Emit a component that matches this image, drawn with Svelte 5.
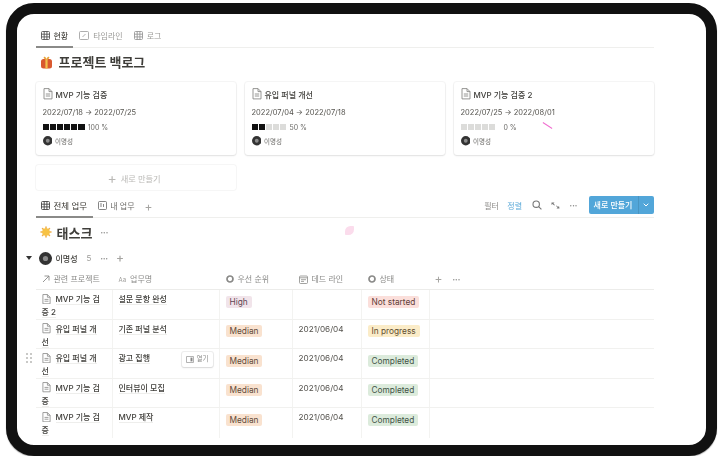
<script lang="ts">
	const cards = [
		{ title: 'MVP 기능 검증', dates: '2022/07/18 → 2022/07/25', on: 6, total: 6, pct: '100 %' },
		{ title: '유입 퍼널 개선', dates: '2022/07/04 → 2022/07/18', on: 2, total: 5, pct: '50 %' },
		{ title: 'MVP 기능 검증 2', dates: '2022/07/25 → 2022/08/01', on: 0, total: 5, pct: '0 %' }
	];
	const rows = [
		{ project: 'MVP 기능 검증 2', task: '설문 문항 완성', pri: 'High', date: '', status: 'Not started' },
		{ project: '유입 퍼널 개선', task: '기존 퍼널 분석', pri: 'Median', date: '2021/06/04', status: 'In progress' },
		{ project: '유입 퍼널 개선', task: '광고 집행', pri: 'Median', date: '2021/06/04', status: 'Completed', hover: true },
		{ project: 'MVP 기능 검증', task: '인터뷰이 모집', pri: 'Median', date: '2021/06/04', status: 'Completed' },
		{ project: 'MVP 기능 검증', task: 'MVP 제작', pri: 'Median', date: '2021/06/04', status: 'Completed' }
	];
	const tagClass = (t: string) => t.toLowerCase().replace(' ', '-');
</script>

{#snippet doc(size = 10)}
	<svg class="doc" width={size} height={size * 1.15} viewBox="0 0 10 11.5" fill="none" stroke="#8a8a88" stroke-width="0.9">
		<path d="M1 .6h5l3 3v7.3H1z" />
		<path d="M6 .6v3h3M2.8 6h4.4M2.8 8h4.4" />
	</svg>
{/snippet}

{#snippet table(color = '#4a4a48')}
	<svg width="9" height="9" viewBox="0 0 9 9" fill="none" stroke={color} stroke-width="0.9">
		<rect x=".5" y=".5" width="8" height="8" rx="1" />
		<path d="M.5 3.2h8M.5 5.9h8M3.2 .5v8M5.9 .5v8" />
	</svg>
{/snippet}

{#snippet avatar(size = 10)}
	<svg width={size} height={size} viewBox="0 0 10 10">
		<circle cx="5" cy="5" r="5" fill="#333" />
		<circle cx="5" cy="5" r="2" fill="#8b8b8b" />
	</svg>
{/snippet}

{#snippet radio()}
	<svg width="8" height="8" viewBox="0 0 8 8"><circle cx="4" cy="4" r="3" fill="none" stroke="#8a8a88" stroke-width="1.7" /></svg>
{/snippet}

<div class="device">
	<div class="screen">
		<div class="page">
			<nav class="tabs top-tabs">
				<span class="tab active">{@render table('#555')}현황</span>
				<span class="tab">
					<svg width="10" height="9" viewBox="0 0 10 9" fill="none" stroke="#999" stroke-width="0.8"><rect x=".5" y=".5" width="9" height="8" rx="1" /><path d="M3.500 6l3-3" /></svg>
					타임라인
				</span>
				<span class="tab">{@render table('#999')}로그</span>
			</nav>

			<h1 class="title">
				<svg width="13" height="13" viewBox="0 0 13 13">
					<rect x="1" y="3" width="11" height="9.5" rx="2.500" fill="#d9592f" />
					<rect x="5.4" y="3" width="2.2" height="9.5" fill="#f2c14e" />
					<path d="M6.5 3.5C4 3.5 3 1.5 4 .8s2.500 1 2.500 2.700C6.500 1.800 8 .1 9 .8s0 2.700-2.500 2.700z" fill="#e8a33a" />
				</svg>
				프로젝트 백로그
			</h1>

			<div class="cards">
				{#each cards as card}
					<article class="card">
						<div class="card-title">{@render doc(10)}{card.title}</div>
						<div class="card-dates">{card.dates}</div>
						<div class="progress" class:none={card.on === 0}>
							<span class="blocks">
								{#each Array(card.total) as _, i}
									<i class:on={i < card.on}></i>
								{/each}
							</span>
							{card.pct}
						</div>
						<div class="person">{@render avatar(9.5)}이명성</div>
					</article>
				{/each}
			</div>

			<div class="new-card"><span class="plus">+</span> 새로 만들기</div>

			<div class="view-bar">
				<nav class="tabs">
					<span class="tab active wide">{@render table('#444')}전체 업무</span>
					<span class="tab dark">
						<svg width="9" height="9" viewBox="0 0 9 9" fill="none" stroke="#666" stroke-width="0.8"><rect x=".5" y=".5" width="8" height="8" rx="1" /><path d="M2 3h2M2 5h2M5.500 3v3" /></svg>
						내 업무
					</span>
					<span class="tab-add">+</span>
				</nav>
				<div class="tools">
					<span class="tool">필터</span>
					<span class="tool sort">정렬</span>
					<svg width="10" height="10" viewBox="0 0 10 10" fill="none" stroke="#777" stroke-width="1.100"><circle cx="4.200" cy="4.200" r="3.200" /><path d="M6.600 6.600L9.400 9.400" /></svg>
					<svg width="9" height="9" viewBox="0 0 9 9" fill="#777"><path d="M.5 1.500h3l-1 1 1.400 1.400-.6.600L1.500 3.100l-1 1zM8.500 7.500h-3l1-1-1.400-1.400.6-.6 1.300 1.400 1-1z" /></svg>
					<span class="more">•••</span>
					<div class="new-btn"><span>새로 만들기</span><b>
						<svg width="6" height="4" viewBox="0 0 6 4" fill="none" stroke="#fff" stroke-width="1"><path d="M.7.700L3 3l2.300-2.300" /></svg>
					</b></div>
				</div>
			</div>

			<h2 class="tasks">
				<svg width="12" height="12" viewBox="0 0 12 12">
					<g stroke="#f0b04a" stroke-width="1.500" stroke-linecap="round"><path d="M6 1v10M1 6h10M2.500 2.500l7 7M9.500 2.500l-7 7" /></g>
					<circle cx="6" cy="6" r="3.800" fill="#f7c244" />
				</svg>
				태스크 <span class="more h">•••</span>
			</h2>

			<div class="group">
				<span class="caret"></span>
				{@render avatar(13)}
				<span class="group-name">이명성</span>
				<span class="count">5</span>
				<span class="more">•••</span>
				<span class="tab-add">+</span>
			</div>

			<div class="grid head">
				<div class="cell">
					<svg width="8" height="8" viewBox="0 0 8 8" fill="none" stroke="#8a8a88" stroke-width="0.9"><path d="M1 7L7 1M2.500 1H7v4.500" /></svg>
					관련 프로젝트
				</div>
				<div class="cell"><span class="aa">Aa</span>업무명</div>
				<div class="cell">{@render radio()}우선 순위</div>
				<div class="cell">
					<svg width="9" height="9" viewBox="0 0 9 9" fill="none" stroke="#8a8a88" stroke-width="0.8"><rect x=".5" y="1" width="8" height="7.500" rx="1" /><path d="M.5 2.800h8M2 4.700h5M2 6.400h3" /></svg>
					데드 라인
				</div>
				<div class="cell">{@render radio()}상태</div>
				<div class="cell actions"><span class="tab-add">+</span><span class="more">•••</span></div>
			</div>

			<div class="rows">
				{#each rows as row}
					<div class="grid row">
						{#if row.hover}
							<span class="grip"><i></i><i></i><i></i><i></i><i></i><i></i></span>
						{/if}
						<div class="cell project">
							{@render doc(9)}<span class="link">{row.project}</span>
						</div>
						<div class="cell task">
							<span class="link">{row.task}</span>
							{#if row.hover}
								<span class="open">
									<svg width="8" height="7" viewBox="0 0 8 7" fill="none" stroke="#888" stroke-width="0.7"><rect x=".4" y=".4" width="7.200" height="6.200" rx=".6" /><rect x="4.500" y="1.600" width="2" height="3.800" fill="#888" stroke="none" /></svg>
									열기
								</span>
							{/if}
						</div>
						<div class="cell"><span class="pill {tagClass(row.pri)}">{row.pri}</span></div>
						<div class="cell date">{row.date}</div>
						<div class="cell"><span class="pill {tagClass(row.status)}">{row.status}</span></div>
						<div class="cell"></div>
					</div>
				{/each}
			</div>

			<span class="petal"></span>
			<span class="scratch"></span>
		</div>
	</div>
</div>

<style>
	:global(body) {
		background: #fff;
		overflow: hidden;
	}

	.device {
		box-sizing: border-box;
		width: 711px;
		height: 453px;
		margin: 3px 0 0 6px;
		border: 11.5px solid #111;
		border-radius: 28px;
		background: #fff;
		box-shadow: 0 1px 1px rgba(0, 0, 0, 0.35);
		font-family: Inter, 'Noto Sans CJK KR', sans-serif;
		color: #3f3e3a;
		filter: blur(0.5px);
	}

	.screen {
		height: 100%;
		border-radius: 16px;
		overflow: hidden;
	}

	.page {
		position: relative;
		width: 618px;
		margin-left: 18.500px;
		padding-top: 13.500px;
	}

	.tabs {
		display: flex;
		align-items: stretch;
	}

	.top-tabs {
		gap: 1px;
		height: 19.500px;
		border-bottom: 1px solid #efefed;
	}

	.tab {
		display: flex;
		align-items: center;
		gap: 4px;
		padding: 0 5px 2px;
		margin-bottom: -1px;
		font-size: 8px;
		color: #9b9a97;
		border-bottom: 2px solid transparent;
	}

	.tab.active {
		color: #37352f;
		border-bottom-color: #8a8a88;
	}

	.tab.dark {
		gap: 3px;
		color: #6b6a67;
	}

	.tab.wide {
		font-size: 8.500px;
		padding-right: 6px;
	}

	.title {
		display: flex;
		align-items: center;
		gap: 6px;
		height: 20px;
		margin: 4px 0 0 4px;
		font-size: 13px;
		font-weight: 700;
		line-height: 20px;
	}

	.cards {
		display: grid;
		grid-template-columns: repeat(3, 200px);
		gap: 9px;
		margin-top: 10px;
	}

	.card {
		box-sizing: border-box;
		height: 73px;
		padding: 5px 7px;
		border-radius: 3px;
		background: #fff;
		box-shadow: 0 0 0 1px rgba(15, 15, 15, 0.04), 0 1px 2px rgba(15, 15, 15, 0.09);
	}

	.card-title {
		display: flex;
		align-items: center;
		gap: 3px;
		height: 14px;
		font-size: 8px;
		font-weight: 500;
	}

	.card-dates {
		height: 12px;
		margin-top: 6px;
		font-size: 7.500px;
		line-height: 12px;
		color: #55534e;
	}

	.progress {
		display: flex;
		align-items: center;
		gap: 3px;
		height: 10px;
		margin-top: 3px;
		font-size: 7px;
		color: #6b6a67;
	}

	.progress.none {
		gap: 8px;
	}

	.blocks {
		display: flex;
		gap: 1px;
	}

	.blocks i {
		width: 6.200px;
		height: 6px;
		background: #dcdcda;
	}

	.blocks i.on {
		background: #111;
	}

	.person {
		display: flex;
		align-items: center;
		gap: 3px;
		margin-top: 4px;
		font-size: 6.500px;
		color: #6b6a67;
	}

	.new-card {
		display: flex;
		align-items: center;
		justify-content: center;
		gap: 4px;
		box-sizing: border-box;
		width: 200px;
		height: 25px;
		margin-top: 10px;
		padding-right: 3px;
		border-radius: 3px;
		box-shadow: 0 0 0 1px rgba(15, 15, 15, 0.04);
		font-size: 8.200px;
		color: #b9b8b5;
	}

	.plus {
		font-size: 14px;
		line-height: 1;
	}

	.view-bar {
		display: flex;
		justify-content: space-between;
		height: 21px;
		margin-top: 6px;
		border-bottom: 1px solid #efefed;
	}

	.tab-add {
		align-self: center;
		margin-left: 5px;
		font-size: 12px;
		line-height: 1;
		color: #a5a4a1;
	}

	.tools {
		display: flex;
		align-items: center;
		gap: 9.500px;
		height: 18px;
		font-size: 8px;
	}

	.tool {
		color: #8d8c89;
	}

	.sort {
		margin-left: -1px;
		color: #5aa9d8;
	}

	.more {
		font-size: 4.500px;
		letter-spacing: 0.1px;
		color: #8a8a88;
	}

	.new-btn {
		display: flex;
		align-items: stretch;
		width: 65px;
		height: 18px;
		margin-left: 1.500px;
		border-radius: 2px;
		background: #52a6d9;
		color: #fff;
		font-size: 8px;
		font-weight: 500;
	}

	.new-btn span {
		flex: 1;
		line-height: 18px;
		text-align: center;
	}

	.new-btn b {
		display: flex;
		align-items: center;
		justify-content: center;
		width: 15px;
		border-left: 1px solid rgba(0, 0, 0, 0.1);
	}

	.tasks {
		display: flex;
		align-items: center;
		gap: 5px;
		height: 20px;
		margin: 4px 0 0 4px;
		font-size: 13px;
		font-weight: 700;
	}

	.more.h {
		margin-left: 3px;
		font-weight: 400;
	}

	.group {
		position: relative;
		display: flex;
		align-items: center;
		gap: 4px;
		height: 14px;
		margin: 9px 0 0 3px;
		font-size: 8px;
		font-weight: 500;
	}

	.group-name {
		margin-right: 5px;
	}

	.count {
		margin-right: 5px;
		font-weight: 400;
		color: #9b9a97;
	}

	.group .tab-add {
		margin-left: 4px;
	}

	.caret {
		position: absolute;
		left: -13px;
		top: 5px;
		border: 3px solid transparent;
		border-top: 4.500px solid #333;
		border-bottom: 0;
	}

	.grid {
		position: relative;
		display: grid;
		grid-template-columns: 77px 107px 73px 69px 68px 1fr;
		border-bottom: 1px solid #f1f1ef;
	}

	.head {
		height: 20px;
		margin-top: 4px;
		font-size: 8px;
		color: #8a8a88;
		border-bottom-color: #ececea;
	}

	.head .cell {
		display: flex;
		align-items: center;
		gap: 4px;
		border: 0;
		padding: 0 6px;
		white-space: nowrap;
	}

	.aa {
		font-size: 6px;
		color: #9b9a97;
	}

	.actions {
		gap: 10px !important;
		padding-left: 5px !important;
	}

	.actions .tab-add {
		margin: 0;
	}

	.row {
		box-sizing: border-box;
		height: 29.500px;
		font-size: 8px;
	}

	.row:last-child {
		border-bottom: 0;
	}

	.cell {
		position: relative;
		box-sizing: border-box;
		padding: 3px 6px 0;
		border-right: 1px solid #f3f3f1;
		line-height: 13px;
		overflow: hidden;
	}

	.cell:last-child {
		border-right: 0;
	}

	.project {
		padding-right: 9px;
		font-weight: 500;
		word-break: break-all;
	}

	.doc {
		margin-right: 5px;
		vertical-align: -2px;
	}

	.card-title .doc {
		margin-right: 0;
	}

	.link {
		border-bottom: 1px solid #eeeeec;
	}

	.task {
		font-weight: 500;
		overflow: visible;
	}

	.date {
		padding-top: 3px;
		font-size: 8.200px;
		color: #55534e;
	}

	.pill {
		display: inline-block;
		margin-top: 2.500px;
		padding: 0 4px;
		height: 12px;
		border-radius: 2px;
		font-size: 8.300px;
		font-weight: 400;
		line-height: 12px;
		white-space: nowrap;
	}

	.high { background: #f1e4ea; color: #5f4552; }
	.median { background: #f9e2cf; color: #5f4a3a; }
	.not-started { background: #fbdfdb; color: #5f3d38; }
	.in-progress { background: #fbecc8; color: #5f4d30; }
	.completed { background: #dcebdc; color: #3f5245; }

	.open {
		position: absolute;
		top: 2.500px;
		right: 6px;
		display: flex;
		align-items: center;
		gap: 3px;
		height: 15px;
		padding: 0 4px;
		border-radius: 2px;
		background: #fff;
		box-shadow: 0 0 0 1px rgba(15, 15, 15, 0.07), 0 1px 2px rgba(15, 15, 15, 0.1);
		font-size: 6.500px;
		font-weight: 400;
		color: #8a8a88;
	}

	.grip {
		position: absolute;
		left: -10px;
		top: 4px;
		display: grid;
		grid-template-columns: 2px 2px;
		gap: 2px;
	}

	.grip i {
		width: 2px;
		height: 2px;
		background: #c9c9c7;
	}

	.petal {
		position: absolute;
		left: 309px;
		top: 212px;
		width: 9px;
		height: 9px;
		border-radius: 60% 10% 60% 10%;
		background: #fbdcec;
	}

	.scratch {
		position: absolute;
		left: 506px;
		top: 111px;
		width: 11px;
		height: 1px;
		background: #f06fd0;
		transform: rotate(33deg);
	}
</style>
